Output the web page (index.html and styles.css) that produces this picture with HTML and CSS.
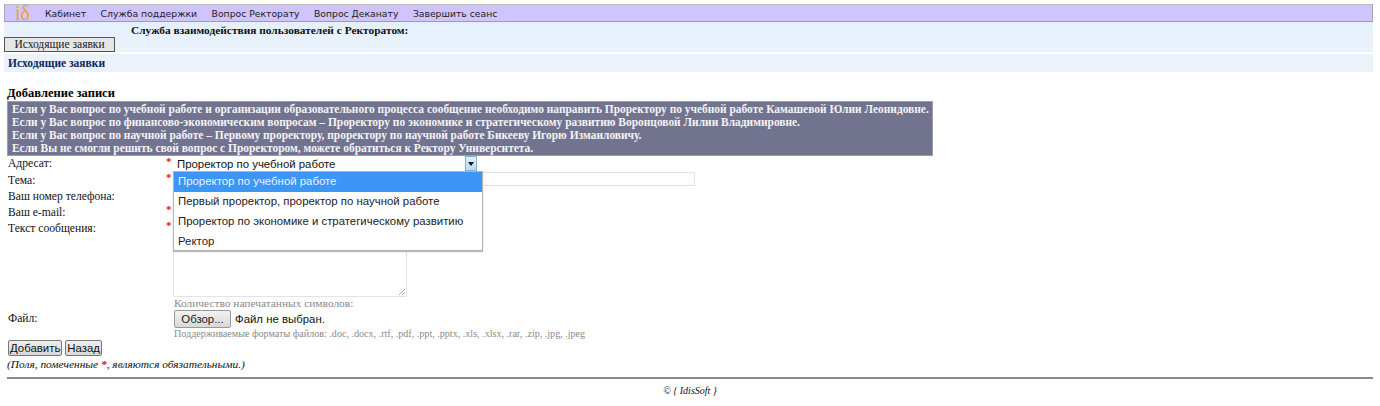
FILE: index.html
```html
<!DOCTYPE html>
<html lang="ru">
<head>
<meta charset="utf-8">
<title>Служба взаимодействия</title>
<link rel="stylesheet" href="styles.css">
</head>
<body>
<nav class="nav">
  <span class="logo">i<span class="logo-d">δ</span></span>
  <a class="nav-link">Кабинет</a>
  <a class="nav-link">Служба поддержки</a>
  <a class="nav-link">Вопрос Ректорату</a>
  <a class="nav-link">Вопрос Деканату</a>
  <a class="nav-link">Завершить сеанс</a>
</nav>
<section class="service">
  <div class="service-title">Служба взаимодействия пользователей с Ректоратом:</div>
  <button class="tab-btn" type="button">Исходящие заявки</button>
</section>
<div class="subhead">Исходящие заявки</div>
<main class="content">
  <h2 class="add-title">Добавление записи</h2>
  <div class="notice">
    <div>Если у Вас вопрос по учебной работе и организации образовательного процесса сообщение необходимо направить Проректору по учебной работе Камашевой Юлии Леонидовне.</div>
    <div>Если у Вас вопрос по финансово-экономическим вопросам – Проректору по экономике и стратегическому развитию Воронцовой Лилии Владимировне.</div>
    <div>Если у Вас вопрос по научной работе – Первому проректору, проректору по научной работе Бикееву Игорю Измаиловичу.</div>
    <div>Если Вы не смогли решить свой вопрос с Проректором, можете обратиться к Ректору Университета.</div>
  </div>
  <form class="form">
    <div class="label label-first">Адресат:</div><div class="star">*</div>
    <div class="control">
      <div class="select"><span class="select-value">Проректор по учебной работе</span><span class="select-arrow"></span></div>
      <ul class="dropdown">
        <li class="option option-active">Проректор по учебной работе</li>
        <li class="option">Первый проректор, проректор по научной работе</li>
        <li class="option">Проректор по экономике и стратегическому развитию</li>
        <li class="option">Ректор</li>
      </ul>
    </div>
    <div class="label">Тема:</div><div class="star">*</div>
    <div class="control"><div class="text-input text-wide"></div></div>
    <div class="label">Ваш номер телефона:</div><div class="star"></div>
    <div class="control"><div class="text-input"></div></div>
    <div class="label">Ваш e-mail:</div><div class="star">*</div>
    <div class="control"><div class="text-input"></div></div>
    <div class="label">Текст сообщения:</div><div class="star">*</div>
    <div class="control">
      <div class="textarea"><svg class="grip" width="8" height="8" viewBox="0 0 8 8"><path d="M7 1 1 7M7 4 4 7" stroke="#aaa" stroke-width="1" fill="none"/></svg></div>
      <div class="hint">Количество напечатанных символов:</div>
    </div>
    <div class="label label-first label-file">Файл:</div><div class="star"></div>
    <div class="control">
      <div class="file"><button class="browse" type="button">Обзор...</button><span class="file-name">Файл не выбран.</span></div>
      <div class="hint hint-formats">Поддерживаемые форматы файлов: .doc, .docx, .rtf, .pdf, .ppt, .pptx, .xls, .xlsx, .rar, .zip, .jpg, .jpeg</div>
    </div>
  </form>
  <div class="actions">
    <button class="action" type="button">Добавить</button>
    <button class="action" type="button">Назад</button>
  </div>
  <p class="required">(Поля, помеченные <span class="req-star">*</span>, являются обязательными.)</p>
  <hr class="rule">
  <footer class="footer">© { IdisSoft }</footer>
</main>
</body>
</html>
```
FILE: styles.css
```css
* { box-sizing: border-box; }
html, body { height: 100%; }
body {
  margin: 0;
  padding: 4px 7px 0 4px;
  background: #fff;
  color: #111;
  font: 11.6px "Liberation Serif", serif;
  overflow: hidden;
}
.nav {
  display: flex;
  align-items: center;
  height: 18px;
  background: #d0c4fe;
  border: 1px solid #a9a4b8;
  border-top-color: #bbb;
  border-bottom-color: #a09ab5;
  font: 9.25px "DejaVu Sans", sans-serif;
  color: #222;
  padding-left: 10px;
}
.logo {
  width: 30px;
  font: 20px/16px "Liberation Serif", serif;
  color: #f2a02e;
}
.nav-link { margin-right: 14.5px; }
.service {
  height: 30px;
  background: linear-gradient(#e4f0fe, #ebf2fb);
}
.service-title {
  padding-left: 127px;
  height: 15px;
  font-weight: bold;
  font-size: 11.4px;
  line-height: 16px;
}
.tab-btn {
  display: block;
  width: 111px;
  height: 15px;
  margin: 0;
  padding: 0;
  background: #e6e6e6;
  border: 1px solid #555;
  font: 11.5px/13px "Liberation Serif", serif;
  color: #222;
}
.subhead {
  height: 18px;
  margin-top: 2px;
  padding-left: 4px;
  background: #ebf2fb;
  color: #0a2a5e;
  font-weight: bold;
  font-size: 11.5px;
  line-height: 18px;
}
.content { padding: 14px 0 0 3px; }
.add-title {
  margin: 0;
  height: 15px;
  font-size: 12.5px;
  line-height: 14px;
  color: #000;
}
.notice {
  width: 926px;
  height: 55px;
  padding: 1px 0 0 4px;
  background: #72748f;
  border: 1px solid #9a9cb0;
  color: #f2f2f6;
  font-weight: bold;
  font-size: 11.43px;
  line-height: 13px;
  white-space: nowrap;
}
.form {
  display: grid;
  grid-template-columns: 159px 7px 1fr;
}
.label { height: 16px; line-height: 18px; padding-left: 1px; }
.label-first { line-height: 16px; }
.star { color: #e8101c; font-weight: bold; line-height: 11px; font-size: 11px; }
.control { position: relative; min-height: 16px; }
.select {
  display: flex;
  justify-content: space-between;
  align-items: center;
  width: 304px;
  height: 15px;
  font: 11.4px "Liberation Sans", sans-serif;
  color: #111;
  padding-left: 4px;
}
.select-arrow {
  position: relative;
  width: 12px;
  height: 15px;
  background: linear-gradient(#e3effa, #b9d8f2);
  border: 1px solid #8fb0cc;
}
.select-arrow::after {
  content: "";
  position: absolute;
  left: 2px;
  top: 5px;
  border: 3px solid transparent;
  border-top: 4px solid #111;
  border-bottom: 0;
}
.dropdown {
  position: absolute;
  z-index: 2;
  left: 0;
  top: 15px;
  width: 310px;
  height: 80px;
  margin: 0;
  padding: 0;
  list-style: none;
  background: #fff;
  border: 1px solid #b4b4b4;
  box-shadow: 0 1px 1px #bbb;
  font: 11.4px "Liberation Sans", sans-serif;
}
.option { height: 20px; line-height: 19px; padding-left: 4px; color: #222; }
.option-active { background: #3c96f5; color: #e8f2ff; height: 20px; }
.text-input {
  height: 14px;
  border: 1px solid #e2e2e2;
  background: #fff;
  width: 234px;
}
.text-wide { width: 522px; }
.textarea {
  position: relative;
  width: 234px;
  height: 77px;
  border: 1px solid #e2e2ea;
  border-radius: 1px;
}
.grip { position: absolute; right: 0; bottom: 0; }
.hint {
  color: #8a8a8a;
  font-size: 11.4px;
  line-height: 12px;
  height: 14px;
  padding-left: 1px;
}
.hint-formats { font-size: 10.1px; line-height: 12px; height: 12px; margin-top: 1px; white-space: nowrap; }
.file { display: flex; align-items: center; height: 16px; padding-left: 1px; }
.browse {
  flex: none;
  width: 57px;
  height: 18px;
  padding: 0;
  background: linear-gradient(#f2f2f2, #d8d8d8);
  border: 1px solid #999;
  border-radius: 2px;
  font: 11.4px "Liberation Sans", sans-serif;
  color: #222;
}
.file-name { margin-left: 4px; font: 11.4px "Liberation Sans", sans-serif; color: #111; }
.label-file { line-height: 15px; }
.actions { display: flex; gap: 3px; padding-left: 1px; }
.action {
  height: 16px;
  padding: 0 1px;
  background: linear-gradient(#eee, #d8d8d8);
  border: 1px solid #777;
  border-radius: 2px;
  font: 11.4px/12px "Liberation Sans", sans-serif;
  color: #111;
}
.required { margin: 1px 0 0; font-style: italic; font-size: 11.4px; line-height: 14px; }
.req-star { color: #e8101c; font-weight: bold; }
.rule { margin: 6px 0 0; height: 2px; border: 0; background: #8a8a8a; }
.footer { margin-top: 5px; text-align: center; font-style: italic; font-size: 10px; line-height: 13px; }
```
